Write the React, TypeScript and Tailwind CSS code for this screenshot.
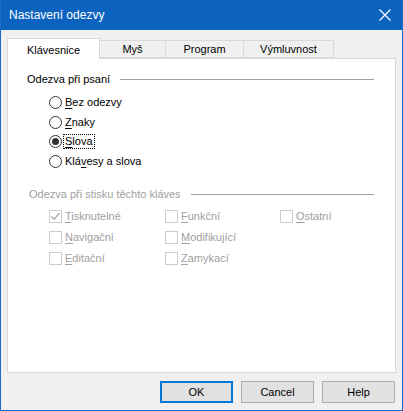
import React from "react";

const FONT = { fontFamily: '"Liberation Sans", Arial, sans-serif' };

function Mn({ pre = "", key1, post = "" }: { pre?: string; key1: string; post?: string }) {
  return (
    <span>
      {pre}
      <span className="underline underline-offset-[2px]">{key1}</span>
      {post}
    </span>
  );
}

function Radio({ checked, children, focused }: { checked?: boolean; children: React.ReactNode; focused?: boolean }) {
  return (
    <div className="flex h-[19.5px] items-center">
      <span className="flex h-[13px] w-[13px] items-center justify-center rounded-full border border-[#333333] bg-white">
        {checked && <span className="h-[7px] w-[7px] rounded-full bg-[#333333]" />}
      </span>
      <span
        className={`ml-[2px] px-[1px] leading-[13px] ${focused ? "outline outline-1 outline-dotted outline-[#000]" : ""}`}
      >
        {children}
      </span>
    </div>
  );
}

function Check({ checked, children }: { checked?: boolean; children: React.ReactNode }) {
  return (
    <div className="flex h-[21px] items-center text-[#a0a0a0]">
      <span className="flex h-[13px] w-[13px] items-center justify-center border border-[#cccccc] bg-white">
        {checked && (
          <svg width="11" height="11" viewBox="0 0 11 11">
            <path d="M1.5 5.5 L4.2 8.2 L9.5 2" fill="none" stroke="#a8a8a8" strokeWidth="1.3" />
          </svg>
        )}
      </span>
      <span className="ml-[3px]">{children}</span>
    </div>
  );
}

export default function App() {
  return (
    <div className="flex h-[411px] w-[403px] flex-col bg-[#1a6cc4] px-px pb-px" style={FONT}>
      {/* Title bar */}
      <header className="flex h-[30px] shrink-0 items-center justify-between bg-[#0b63bf] pl-[8px] pr-[11px] text-white">
        <span className="text-[12px]">Nastavení odezvy</span>
        <svg width="12" height="12" viewBox="0 0 12 12">
          <path d="M0.5 0.5 L11.5 11.5 M11.5 0.5 L0.5 11.5" stroke="#ffffff" strokeWidth="1.2" />
        </svg>
      </header>

      <div className="flex flex-1 flex-col bg-[#f0f0f0] text-[11px] text-black">
        {/* Tabs */}
        <div className="mt-[8px] flex h-[20px] items-end pl-[6px]">
          <div className="relative z-10 -mb-px flex h-[21px] w-[93px] items-start justify-center border border-b-0 border-[#d9d9d9] bg-white pt-[3px]">
            Klávesnice
          </div>
          <div className="flex h-[18px] w-[66px] items-center justify-center border border-l-0 border-[#d9d9d9] bg-[#f0f0f0]">
            Myš
          </div>
          <div className="flex h-[18px] w-[78px] items-center justify-center border border-l-0 border-[#d9d9d9] bg-[#f0f0f0]">
            Program
          </div>
          <div className="flex h-[18px] w-[90px] items-center justify-center border border-l-0 border-[#d9d9d9] bg-[#f0f0f0]">
            Výmluvnost
          </div>
        </div>

        {/* Panel */}
        <div className="mx-[6px] h-[315px] border border-[#d9d9d9] bg-white pl-[19px] pr-[21px] pt-[13px]">
          <div className="flex h-[14px] items-center">
            <span>Odezva při psaní</span>
            <span className="ml-[10px] h-px flex-1 bg-[#a0a0a0]" />
          </div>
          <div className="mt-[7px] flex flex-col pl-[22px]">
            <Radio>
              <Mn key1="B" post="ez odezvy" />
            </Radio>
            <Radio>
              <Mn key1="Z" post="naky" />
            </Radio>
            <Radio checked focused>
              <Mn key1="S" post="lova" />
            </Radio>
            <Radio>
              <Mn pre="Klá" key1="v" post="esy a slova" />
            </Radio>
          </div>

          <div className="mt-[16px] flex h-[14px] items-center pl-[2px] text-[#a0a0a0]">
            <span>Odezva při stisku těchto kláves</span>
            <span className="ml-[10px] h-px flex-1 bg-[#a0a0a0]" />
          </div>
          <div className="mt-[5px] grid grid-cols-[116px_115px_1fr] pl-[22px]">
            <Check checked>
              <Mn key1="T" post="isknutelné" />
            </Check>
            <Check>
              <Mn key1="F" post="unkční" />
            </Check>
            <Check>
              <Mn key1="O" post="statní" />
            </Check>
            <Check>
              <Mn key1="N" post="avigační" />
            </Check>
            <Check>
              <Mn key1="M" post="odifikující" />
            </Check>
            <div />
            <Check>
              <Mn key1="E" post="ditační" />
            </Check>
            <Check>
              <Mn key1="Z" post="amykací" />
            </Check>
          </div>
        </div>

        {/* Buttons */}
        <div className="mt-[8px] flex justify-end gap-[8px] pr-[7px]">
          <button className="h-[22px] w-[73px] border-2 border-[#0078d7] bg-[#e1e1e1]">OK</button>
          <button className="h-[22px] w-[73px] border border-[#adadad] bg-[#e1e1e1]">Cancel</button>
          <button className="h-[22px] w-[73px] border border-[#adadad] bg-[#e1e1e1]">Help</button>
        </div>
      </div>
    </div>
  );
}
